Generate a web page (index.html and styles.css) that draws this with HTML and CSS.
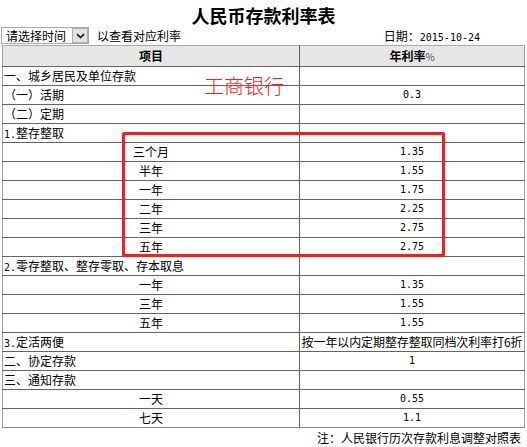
FILE: index.html
```html
<!DOCTYPE html>
<html lang="zh">
<head>
<meta charset="utf-8">
<title>人民币存款利率表</title>
<link rel="stylesheet" href="styles.css">
</head>
<body>
<div class="page">
  <h1 class="title">人民币存款利率表</h1>
  <div class="toolbar">
    <div class="select">
      <span class="select-text">请选择时间</span>
      <span class="select-btn"><svg width="9" height="6" viewBox="0 0 9 6"><path d="M1 1.2 L4.5 4.6 L8 1.2" fill="none" stroke="#17223b" stroke-width="1.8"/></svg></span>
    </div>
    <span class="hint">以查看对应利率</span>
    <span class="date">日期：<span class="mono">2015-10-24</span></span>
  </div>
  <div class="table-wrap">
    <table class="rates">
      <colgroup><col class="c1"><col class="c2"></colgroup>
      <thead>
        <tr><th>项目</th><th>年利率<span class="pct">%</span></th></tr>
      </thead>
      <tbody>
        <tr><td class="l">一、城乡居民及单位存款</td><td></td></tr>
        <tr><td class="l">（一）活期</td><td class="num">0.3</td></tr>
        <tr><td class="l">（二）定期</td><td></td></tr>
        <tr><td class="l"><span class="mono">1.</span>整存整取</td><td></td></tr>
        <tr><td>三个月</td><td class="num">1.35</td></tr>
        <tr><td>半年</td><td class="num">1.55</td></tr>
        <tr><td>一年</td><td class="num">1.75</td></tr>
        <tr><td>二年</td><td class="num">2.25</td></tr>
        <tr><td>三年</td><td class="num">2.75</td></tr>
        <tr><td>五年</td><td class="num">2.75</td></tr>
        <tr><td class="l"><span class="mono">2.</span>零存整取、整存零取、存本取息</td><td></td></tr>
        <tr><td>一年</td><td class="num">1.35</td></tr>
        <tr><td>三年</td><td class="num">1.55</td></tr>
        <tr><td>五年</td><td class="num">1.55</td></tr>
        <tr><td class="l"><span class="mono">3.</span>定活两便</td><td class="tight">按一年以内定期整存整取同档次利率打6折</td></tr>
        <tr><td class="l">二、协定存款</td><td class="num">1</td></tr>
        <tr><td class="l">三、通知存款</td><td></td></tr>
        <tr><td>一天</td><td class="num">0.55</td></tr>
        <tr><td>七天</td><td class="num">1.1</td></tr>
      </tbody>
    </table>
    <div class="bank-label">工商银行</div>
    <div class="highlight"></div>
  </div>
  <div class="note">注：人民银行历次存款利息调整对照表</div>
</div>
</body>
</html>
```

FILE: styles.css
```css
html, body {
  margin: 0;
  padding: 0;
  background: #fff;
}
body {
  font-family: "Noto Sans CJK SC", "Noto Sans", sans-serif;
  font-size: 12px;
  color: #000;
}
.page {
  width: 527px;
}
.title {
  margin: 0;
  padding-top: 4px;
  height: 22px;
  line-height: 22px;
  font-size: 18px;
  font-weight: bold;
  text-align: center;
}
.toolbar {
  display: flex;
  align-items: center;
  height: 19px;
  padding-left: 1px;
}
.select {
  display: flex;
  align-items: stretch;
  height: 15px;
  border: 1px solid #a9a9a9;
  background: #fff;
}
.select-text {
  width: 66px;
  padding-left: 4px;
  line-height: 15px;
  font-size: 12px;
}
.select-btn {
  width: 16px;
  display: flex;
  align-items: center;
  justify-content: center;
  background: #e1e1e1;
  border: 1px solid #adadad;
  box-sizing: border-box;
}
.hint {
  margin-left: 8px;
  line-height: 15px;
}
.date {
  margin-left: auto;
  margin-right: 47px;
  line-height: 15px;
}
.mono {
  font-family: "DejaVu Sans Mono", "Liberation Mono", monospace;
  font-size: 10px;
  line-height: 10px;
}
.table-wrap {
  position: relative;
  margin-left: 2px;
  width: 522px;
}
.rates {
  border-collapse: collapse;
  table-layout: fixed;
  width: 522px;
}
.rates col.c1 { width: 297px; }
.rates col.c2 { width: 225px; }
.rates th,
.rates td {
  border: 1px solid #646464;
  padding: 0;
  height: 18px;
  line-height: 18px;
  text-align: center;
  white-space: nowrap;
  overflow: visible;
  box-sizing: border-box;
}
.rates td.num {
  font-family: "DejaVu Sans Mono", "Liberation Mono", monospace;
  font-size: 10px;
}
.rates th {
  height: 20px;
  line-height: 20px;
  background: #e6e6e6;
  font-weight: bold;
  font-size: 12px;
  border-top-color: #ababab;
}
.rates tr > *:first-child { border-left-color: #a0a0a0; }
.rates tr > *:last-child { border-right-color: #a0a0a0; }
.rates tbody tr:last-child td { border-bottom-color: #8a8a8a; }
.rates td.l {
  text-align: left;
  padding-left: 1px;
}
.rates td.tight {
  letter-spacing: -0.1px;
}
.pct {
  font-weight: normal;
  font-size: 10px;
  line-height: 10px;
  color: #555;
}
.bank-label {
  position: absolute;
  left: 202px;
  top: 29px;
  font-size: 20px;
  line-height: 24px;
  color: #ff1a1a;
  font-weight: 300;
}
.highlight {
  position: absolute;
  left: 120px;
  top: 87px;
  width: 317px;
  height: 119px;
  border: 3px solid #fb1d1d;
  border-radius: 2px;
}
.note {
  text-align: right;
  padding-right: 6px;
  margin-top: 1px;
  line-height: 18px;
}
```
